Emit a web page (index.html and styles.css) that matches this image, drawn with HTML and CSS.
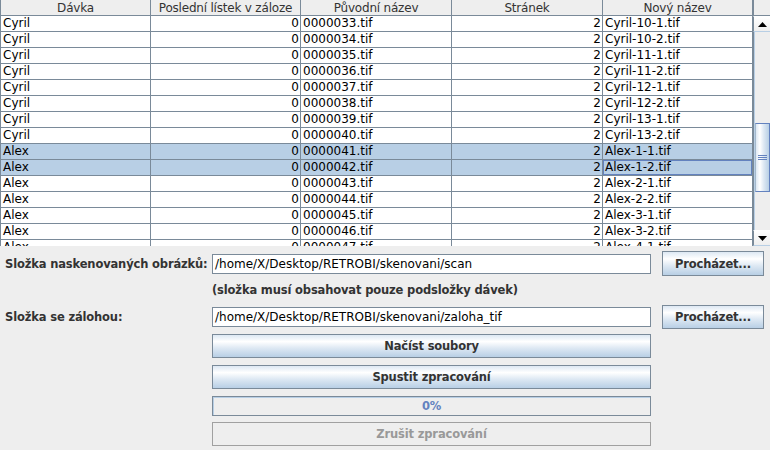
FILE: index.html
```html
<!DOCTYPE html>
<html>
<head>
<meta charset="utf-8">
<link rel="stylesheet" href="styles.css">
</head>
<body>
<div class="pane">
  <div class="table">
    <div class="head">
      <div class="hc">Dávka</div>
      <div class="hc">Poslední lístek v záloze</div>
      <div class="hc">Původní název</div>
      <div class="hc">Stránek</div>
      <div class="hc">Nový název</div>
    </div>
    <div class="rows">
      <div class="row"><div class="c">Cyril</div><div class="c num">0</div><div class="c">0000033.tif</div><div class="c num">2</div><div class="c">Cyril-10-1.tif</div></div>
      <div class="row"><div class="c">Cyril</div><div class="c num">0</div><div class="c">0000034.tif</div><div class="c num">2</div><div class="c">Cyril-10-2.tif</div></div>
      <div class="row"><div class="c">Cyril</div><div class="c num">0</div><div class="c">0000035.tif</div><div class="c num">2</div><div class="c">Cyril-11-1.tif</div></div>
      <div class="row"><div class="c">Cyril</div><div class="c num">0</div><div class="c">0000036.tif</div><div class="c num">2</div><div class="c">Cyril-11-2.tif</div></div>
      <div class="row"><div class="c">Cyril</div><div class="c num">0</div><div class="c">0000037.tif</div><div class="c num">2</div><div class="c">Cyril-12-1.tif</div></div>
      <div class="row"><div class="c">Cyril</div><div class="c num">0</div><div class="c">0000038.tif</div><div class="c num">2</div><div class="c">Cyril-12-2.tif</div></div>
      <div class="row"><div class="c">Cyril</div><div class="c num">0</div><div class="c">0000039.tif</div><div class="c num">2</div><div class="c">Cyril-13-1.tif</div></div>
      <div class="row"><div class="c">Cyril</div><div class="c num">0</div><div class="c">0000040.tif</div><div class="c num">2</div><div class="c">Cyril-13-2.tif</div></div>
      <div class="row sel"><div class="c">Alex</div><div class="c num">0</div><div class="c">0000041.tif</div><div class="c num">2</div><div class="c">Alex-1-1.tif</div></div>
      <div class="row sel"><div class="c">Alex</div><div class="c num">0</div><div class="c">0000042.tif</div><div class="c num">2</div><div class="c focus">Alex-1-2.tif</div></div>
      <div class="row"><div class="c">Alex</div><div class="c num">0</div><div class="c">0000043.tif</div><div class="c num">2</div><div class="c">Alex-2-1.tif</div></div>
      <div class="row"><div class="c">Alex</div><div class="c num">0</div><div class="c">0000044.tif</div><div class="c num">2</div><div class="c">Alex-2-2.tif</div></div>
      <div class="row"><div class="c">Alex</div><div class="c num">0</div><div class="c">0000045.tif</div><div class="c num">2</div><div class="c">Alex-3-1.tif</div></div>
      <div class="row"><div class="c">Alex</div><div class="c num">0</div><div class="c">0000046.tif</div><div class="c num">2</div><div class="c">Alex-3-2.tif</div></div>
      <div class="row"><div class="c">Alex</div><div class="c num">0</div><div class="c">0000047.tif</div><div class="c num">2</div><div class="c">Alex-4-1.tif</div></div>
    </div>
  </div>
  <div class="vscroll">
    <div class="corner"></div>
    <div class="sbtn">
      <svg width="9" height="5" viewBox="0 0 9 5"><polygon points="4.5,0 9,5 0,5" fill="#000"/></svg>
    </div>
    <div class="track">
      <div class="thumb">
        <div class="grip"></div>
      </div>
    </div>
    <div class="sbtn">
      <svg width="9" height="5" viewBox="0 0 9 5"><polygon points="0,0 9,0 4.5,5" fill="#000"/></svg>
    </div>
  </div>
</div>

<div class="form">
  <div class="frow r1">
    <div class="label">Složka naskenovaných obrázků:</div>
    <div class="field">/home/X/Desktop/RETROBI/skenovani/scan</div>
    <div class="btn browse">Procházet...</div>
  </div>
  <div class="note">(složka musí obsahovat pouze podsložky dávek)</div>
  <div class="frow r3">
    <div class="label">Složka se zálohou:</div>
    <div class="field">/home/X/Desktop/RETROBI/skenovani/zaloha_tif</div>
    <div class="btn browse">Procházet...</div>
  </div>
  <div class="actions">
    <div class="btn wide b1">Načíst soubory</div>
    <div class="btn wide b2">Spustit zpracování</div>
    <div class="progress">0%</div>
    <div class="btn wide disabled">Zrušit zpracování</div>
  </div>
</div>
</body>
</html>
```

FILE: styles.css
```css
* { box-sizing: border-box; }
html, body {
  margin: 0;
  padding: 0;
  background: #eeeeee;
  width: 770px;
  height: 450px;
  overflow: hidden;
  font-family: "DejaVu Sans", sans-serif;
  font-size: 12px;
  color: #333333;
}
.pane {
  display: flex;
  height: 246px;
  overflow: hidden;
}
.table {
  width: 753px;
  display: flex;
  flex-direction: column;
  border-left: 1px solid #7a8a99;
}
.head, .row {
  display: grid;
  grid-template-columns: 150px 150px 151px 151px 150px;
}
.head {
  height: 16px;
  background: #eeeeee;
  border-bottom: 1px solid #7a8a99;
}
.hc {
  border-right: 1px solid #7a8a99;
  text-align: center;
  line-height: 16px;
  color: #333;
  white-space: nowrap;
  overflow: hidden;
  letter-spacing: -0.2px;
}
.rows {
  flex: 1;
  overflow: hidden;
  background: #fff;
}
.row {
  height: 16px;
  color: #000;
}
.row.sel { background: #b8cfe5; }
.c {
  border-right: 1px solid #7a8a99;
  border-bottom: 1px solid #7a8a99;
  line-height: 15px;
  padding-left: 2px;
  white-space: nowrap;
  overflow: hidden;
}
.c.num {
  text-align: right;
  padding-left: 0;
  padding-right: 1px;
}
.c.focus {
  box-shadow: inset 0 0 0 1px #6382bf;
}
.vscroll {
  width: 17px;
  display: flex;
  flex-direction: column;
}
.corner {
  height: 16px;
  background: #eeeeee;
  border-bottom: 1px solid #7a8a99;
  border-left: 1px solid #7a8a99;
}
.sbtn {
  height: 16px;
  border-left: 1px solid #7a8a99;
  border-top: 1px solid #fff;
  border-bottom: 1px solid #b8cfe5;
  background: linear-gradient(to bottom, #ffffff, #eeeeee);
  display: flex;
  align-items: center;
  justify-content: center;
}
.track {
  flex: 1;
  background: #eeeeee;
  border-left: 1px solid #7a8a99;
  box-shadow: inset 1px 0 0 #b8cfe5;
  overflow: hidden;
}
.thumb {
  margin-top: 91px;
  height: 69px;
  margin-left: 1px;
  border-top: 1px solid #6382bf;
  border-bottom: 1px solid #6382bf;
  border-right: 1px solid #6382bf;
  border-left: 1px solid #a3b8cc;
  background: linear-gradient(to right, #dde8f3 0%, #ffffff 30%, #dde8f3 60%, #b8cfe5 100%);
  display: flex;
  align-items: center;
  justify-content: center;
}
.grip {
  width: 9px;
  height: 5px;
  border-top: 1px solid #6382bf;
  border-bottom: 1px solid #6382bf;
  background: linear-gradient(to bottom, transparent 1px, #6382bf 1px, #6382bf 2px, transparent 2px);
}
.form {
  padding: 0 5px 0 5px;
}
.frow {
  display: flex;
  align-items: center;
}
.r1 { margin-top: 5px; height: 25px; }
.r3 { height: 24px; }
.label, .note, .btn, .progress {
  font-size: 11.5px;
  letter-spacing: -0.15px;
}
.label {
  width: 207px;
  font-weight: bold;
  white-space: nowrap;
}
.field {
  width: 439px;
  height: 20px;
  background: #fff;
  border: 1px solid #7a8a99;
  padding-left: 2px;
  line-height: 18px;
  color: #000;
  white-space: nowrap;
  overflow: hidden;
}
.btn {
  border: 1px solid #7a8a99;
  background: linear-gradient(to bottom, #dde8f3 0%, #ffffff 30%, #dde8f3 60%, #b8cfe5 100%);
  font-weight: bold;
  text-align: center;
  color: #333;
  white-space: nowrap;
}
.browse {
  margin-left: 11px;
  width: 102px;
  height: 100%;
  display: flex;
  align-items: center;
  justify-content: center;
}
.note {
  height: 29px;
  padding-left: 207px;
  font-weight: bold;
  line-height: 29px;
  white-space: nowrap;
}
.actions {
  margin-left: 207px;
  width: 439px;
  display: flex;
  flex-direction: column;
}
.wide {
  height: 24px;
  line-height: 22px;
}
.b1 { margin-top: 5px; }
.b2 { margin-top: 7px; }
.progress {
  margin-top: 7px;
  height: 20px;
  border: 1px solid #7a8a99;
  box-shadow: inset 1px 1px 0 #b8cfe5;
  background: #eeeeee;
  color: #6382bf;
  font-weight: bold;
  text-align: center;
  line-height: 18px;
}
.disabled {
  margin-top: 6px;
  background: #eeeeee;
  border-color: #a0a0a0;
  color: #999999;
}
```
